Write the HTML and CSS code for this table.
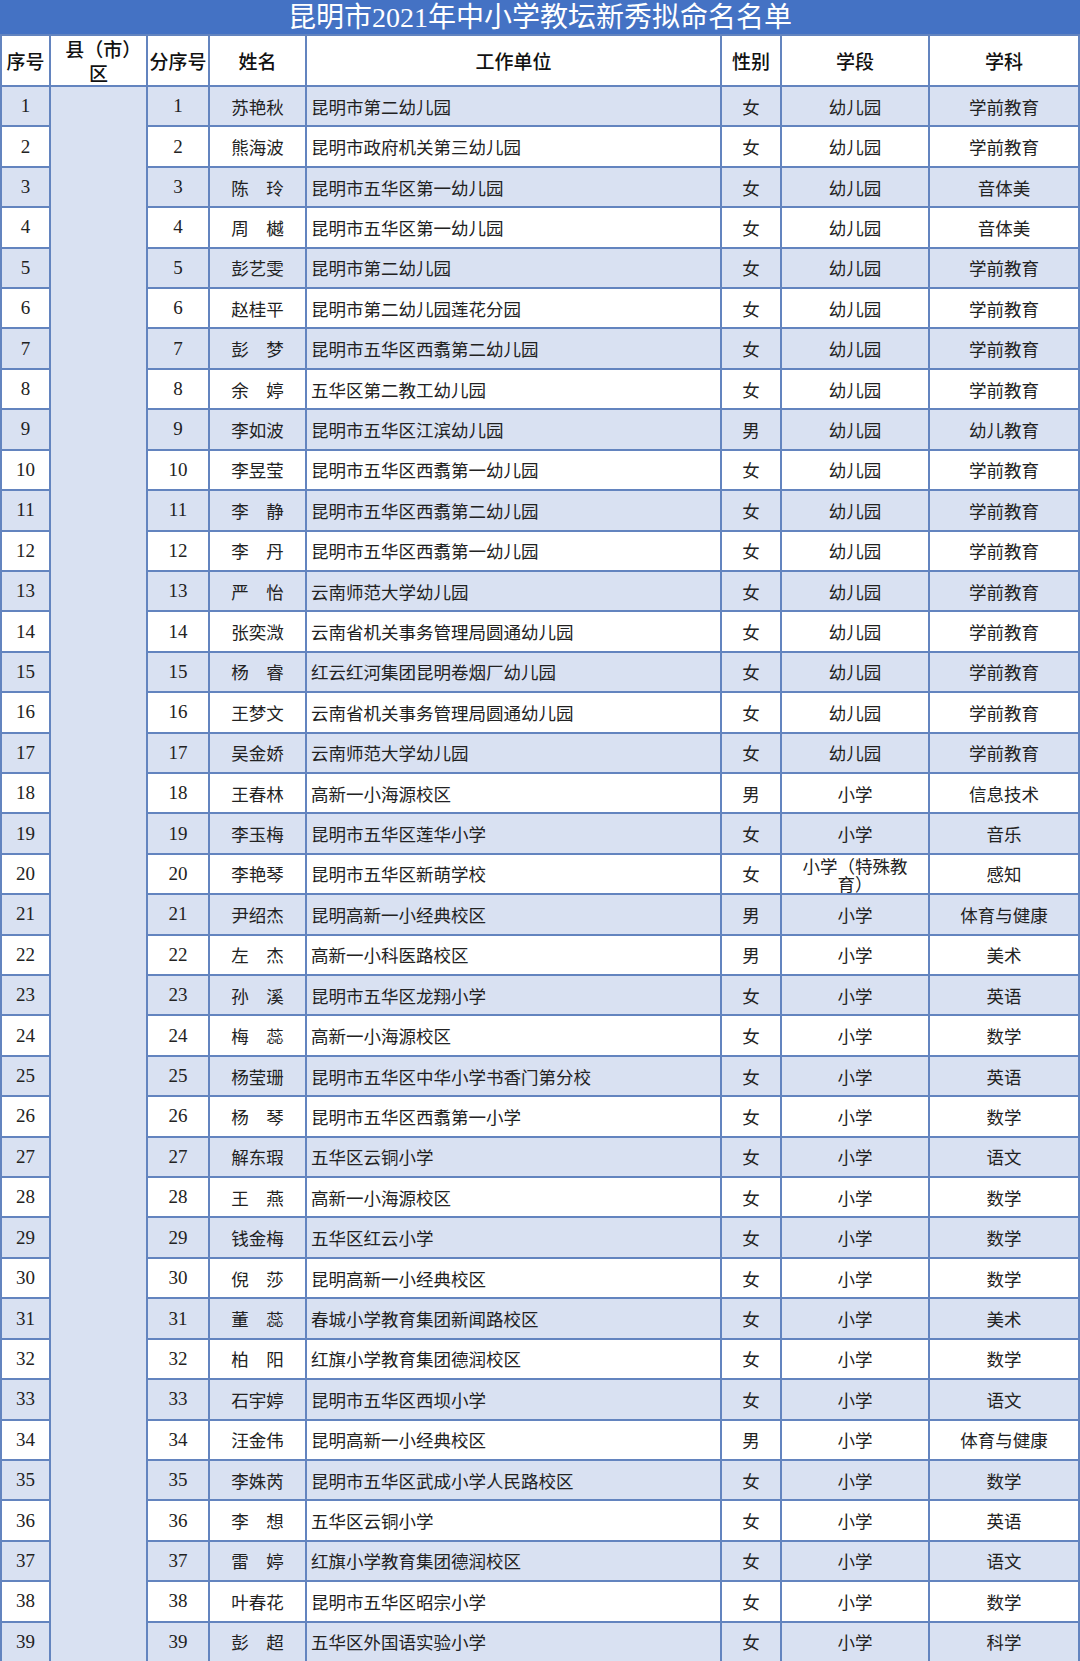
FILE: index.html
```html
<!DOCTYPE html>
<html lang="zh-CN">
<head>
<meta charset="utf-8">
<title>昆明市2021年中小学教坛新秀拟命名名单</title>
<link rel="stylesheet" href="styles.css">
</head>
<body>
<div class="page">
  <div class="title">昆明市2021年中小学教坛新秀拟命名名单</div>
  <div class="sheet">
    <div class="row head">
      <div>序号</div><div class="wrap">县（市）区</div><div>分序号</div><div>姓名</div><div>工作单位</div><div>性别</div><div>学段</div><div>学科</div>
    </div>
    <div class="merged"></div>
    <div class="row alt"><div>1</div><div>1</div><div>苏艳秋</div><div class="unit">昆明市第二幼儿园</div><div>女</div><div>幼儿园</div><div>学前教育</div></div>
    <div class="row"><div>2</div><div>2</div><div>熊海波</div><div class="unit">昆明市政府机关第三幼儿园</div><div>女</div><div>幼儿园</div><div>学前教育</div></div>
    <div class="row alt"><div>3</div><div>3</div><div>陈　玲</div><div class="unit">昆明市五华区第一幼儿园</div><div>女</div><div>幼儿园</div><div>音体美</div></div>
    <div class="row"><div>4</div><div>4</div><div>周　樾</div><div class="unit">昆明市五华区第一幼儿园</div><div>女</div><div>幼儿园</div><div>音体美</div></div>
    <div class="row alt"><div>5</div><div>5</div><div>彭艺雯</div><div class="unit">昆明市第二幼儿园</div><div>女</div><div>幼儿园</div><div>学前教育</div></div>
    <div class="row"><div>6</div><div>6</div><div>赵桂平</div><div class="unit">昆明市第二幼儿园莲花分园</div><div>女</div><div>幼儿园</div><div>学前教育</div></div>
    <div class="row alt"><div>7</div><div>7</div><div>彭　梦</div><div class="unit">昆明市五华区西翥第二幼儿园</div><div>女</div><div>幼儿园</div><div>学前教育</div></div>
    <div class="row"><div>8</div><div>8</div><div>余　婷</div><div class="unit">五华区第二教工幼儿园</div><div>女</div><div>幼儿园</div><div>学前教育</div></div>
    <div class="row alt"><div>9</div><div>9</div><div>李如波</div><div class="unit">昆明市五华区江滨幼儿园</div><div>男</div><div>幼儿园</div><div>幼儿教育</div></div>
    <div class="row"><div>10</div><div>10</div><div>李昱莹</div><div class="unit">昆明市五华区西翥第一幼儿园</div><div>女</div><div>幼儿园</div><div>学前教育</div></div>
    <div class="row alt"><div>11</div><div>11</div><div>李　静</div><div class="unit">昆明市五华区西翥第二幼儿园</div><div>女</div><div>幼儿园</div><div>学前教育</div></div>
    <div class="row"><div>12</div><div>12</div><div>李　丹</div><div class="unit">昆明市五华区西翥第一幼儿园</div><div>女</div><div>幼儿园</div><div>学前教育</div></div>
    <div class="row alt"><div>13</div><div>13</div><div>严　怡</div><div class="unit">云南师范大学幼儿园</div><div>女</div><div>幼儿园</div><div>学前教育</div></div>
    <div class="row"><div>14</div><div>14</div><div>张奕溦</div><div class="unit">云南省机关事务管理局圆通幼儿园</div><div>女</div><div>幼儿园</div><div>学前教育</div></div>
    <div class="row alt"><div>15</div><div>15</div><div>杨　睿</div><div class="unit">红云红河集团昆明卷烟厂幼儿园</div><div>女</div><div>幼儿园</div><div>学前教育</div></div>
    <div class="row"><div>16</div><div>16</div><div>王梦文</div><div class="unit">云南省机关事务管理局圆通幼儿园</div><div>女</div><div>幼儿园</div><div>学前教育</div></div>
    <div class="row alt"><div>17</div><div>17</div><div>吴金娇</div><div class="unit">云南师范大学幼儿园</div><div>女</div><div>幼儿园</div><div>学前教育</div></div>
    <div class="row"><div>18</div><div>18</div><div>王春林</div><div class="unit">高新一小海源校区</div><div>男</div><div>小学</div><div>信息技术</div></div>
    <div class="row alt"><div>19</div><div>19</div><div>李玉梅</div><div class="unit">昆明市五华区莲华小学</div><div>女</div><div>小学</div><div>音乐</div></div>
    <div class="row"><div>20</div><div>20</div><div>李艳琴</div><div class="unit">昆明市五华区新萌学校</div><div>女</div><div class="clip"><span>小学（特殊教育）</span></div><div>感知</div></div>
    <div class="row alt"><div>21</div><div>21</div><div>尹绍杰</div><div class="unit">昆明高新一小经典校区</div><div>男</div><div>小学</div><div>体育与健康</div></div>
    <div class="row"><div>22</div><div>22</div><div>左　杰</div><div class="unit">高新一小科医路校区</div><div>男</div><div>小学</div><div>美术</div></div>
    <div class="row alt"><div>23</div><div>23</div><div>孙　溪</div><div class="unit">昆明市五华区龙翔小学</div><div>女</div><div>小学</div><div>英语</div></div>
    <div class="row"><div>24</div><div>24</div><div>梅　蕊</div><div class="unit">高新一小海源校区</div><div>女</div><div>小学</div><div>数学</div></div>
    <div class="row alt"><div>25</div><div>25</div><div>杨莹珊</div><div class="unit">昆明市五华区中华小学书香门第分校</div><div>女</div><div>小学</div><div>英语</div></div>
    <div class="row"><div>26</div><div>26</div><div>杨　琴</div><div class="unit">昆明市五华区西翥第一小学</div><div>女</div><div>小学</div><div>数学</div></div>
    <div class="row alt"><div>27</div><div>27</div><div>解东瑕</div><div class="unit">五华区云铜小学</div><div>女</div><div>小学</div><div>语文</div></div>
    <div class="row"><div>28</div><div>28</div><div>王　燕</div><div class="unit">高新一小海源校区</div><div>女</div><div>小学</div><div>数学</div></div>
    <div class="row alt"><div>29</div><div>29</div><div>钱金梅</div><div class="unit">五华区红云小学</div><div>女</div><div>小学</div><div>数学</div></div>
    <div class="row"><div>30</div><div>30</div><div>倪　莎</div><div class="unit">昆明高新一小经典校区</div><div>女</div><div>小学</div><div>数学</div></div>
    <div class="row alt"><div>31</div><div>31</div><div>董　蕊</div><div class="unit">春城小学教育集团新闻路校区</div><div>女</div><div>小学</div><div>美术</div></div>
    <div class="row"><div>32</div><div>32</div><div>柏　阳</div><div class="unit">红旗小学教育集团德润校区</div><div>女</div><div>小学</div><div>数学</div></div>
    <div class="row alt"><div>33</div><div>33</div><div>石宇婷</div><div class="unit">昆明市五华区西坝小学</div><div>女</div><div>小学</div><div>语文</div></div>
    <div class="row"><div>34</div><div>34</div><div>汪金伟</div><div class="unit">昆明高新一小经典校区</div><div>男</div><div>小学</div><div>体育与健康</div></div>
    <div class="row alt"><div>35</div><div>35</div><div>李姝芮</div><div class="unit">昆明市五华区武成小学人民路校区</div><div>女</div><div>小学</div><div>数学</div></div>
    <div class="row"><div>36</div><div>36</div><div>李　想</div><div class="unit">五华区云铜小学</div><div>女</div><div>小学</div><div>英语</div></div>
    <div class="row alt"><div>37</div><div>37</div><div>雷　婷</div><div class="unit">红旗小学教育集团德润校区</div><div>女</div><div>小学</div><div>语文</div></div>
    <div class="row"><div>38</div><div>38</div><div>叶春花</div><div class="unit">昆明市五华区昭宗小学</div><div>女</div><div>小学</div><div>数学</div></div>
    <div class="row alt"><div>39</div><div>39</div><div>彭　超</div><div class="unit">五华区外国语实验小学</div><div>女</div><div>小学</div><div>科学</div></div>
  </div>
</div>
</body>
</html>
```
FILE: styles.css
```css
html, body {
  margin: 0;
  padding: 0;
  background: #ffffff;
}

.page {
  width: 1080px;
  height: 1661px;
  overflow: hidden;
  display: flex;
  flex-direction: column;
  font-family: "Liberation Serif", "Noto Sans CJK SC", serif;
  color: #222222;
}

.title {
  height: 34px;
  flex: none;
  background: #4472c4;
  color: #ffffff;
  font-size: 28px;
  line-height: 36px;
  text-align: center;
  white-space: nowrap;
  overflow: hidden;
}

.sheet {
  flex: 1;
  display: grid;
  grid-template-columns: 47px 95px 60px 95px 413px 58px 146px 148px;
  grid-template-rows: 49px repeat(39, 1fr);
  gap: 2px;
  padding: 2px 2px 0 2px;
  background: #6384bf;
  min-height: 0;
}

.row {
  display: contents;
}

.row > div {
  background: #ffffff;
  display: flex;
  align-items: center;
  justify-content: center;
  text-align: center;
  font-size: 17.5px;
  overflow: hidden;
  white-space: nowrap;
  min-height: 0;
}

.row:not(.head) > div:nth-child(-n+2) {
  font-size: 19px;
}

.row.alt > div {
  background: #d9e1f2;
}

.row.head > div {
  font-family: "Noto Sans CJK SC", sans-serif;
  font-weight: 500;
  font-size: 19px;
  color: #111111;
}

.row.head > .wrap {
  white-space: normal;
  line-height: 24px;
  padding: 0 14px;
}

.row > .unit {
  justify-content: flex-start;
  padding-left: 4px;
  text-align: left;
}

.row > .clip {
  align-items: flex-start;
  white-space: normal;
}

.clip > span {
  display: block;
  width: 112px;
  line-height: 18px;
  padding-top: 3px;
}

.merged {
  grid-column: 2;
  grid-row: 2 / span 39;
  background: #d9e1f2;
}
```
